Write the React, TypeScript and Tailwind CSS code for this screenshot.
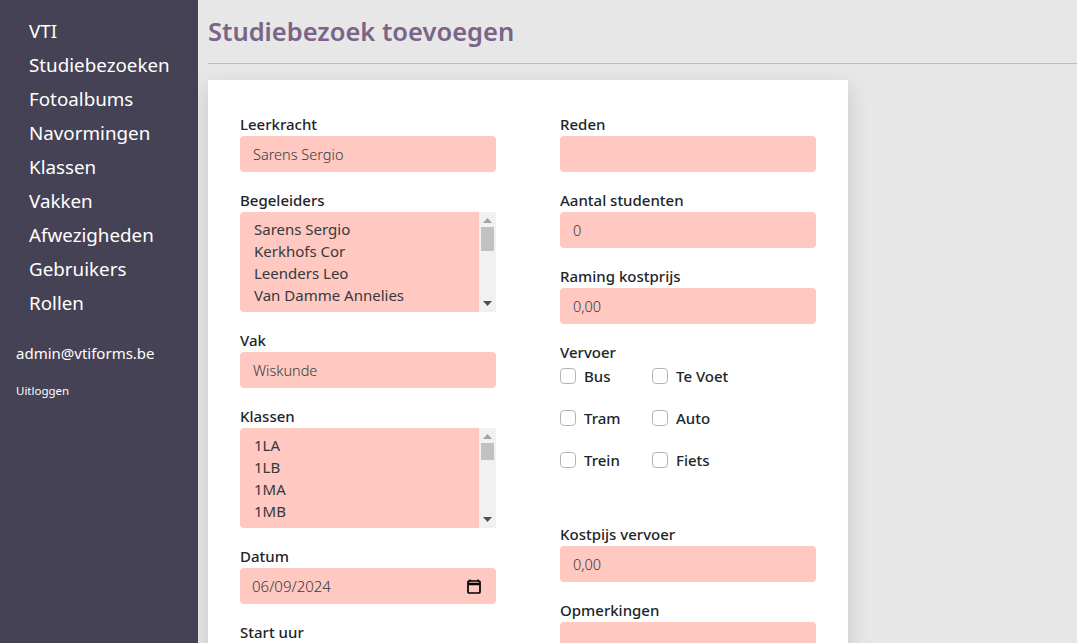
import React from 'react';

const navItems = ['VTI', 'Studiebezoeken', 'Fotoalbums', 'Navormingen', 'Klassen', 'Vakken', 'Afwezigheden', 'Gebruikers', 'Rollen'];

const Field: React.FC<{ label: string; value?: string; children?: React.ReactNode }> = ({ label, value, children }) => (
  <div className="mb-[16px]">
    <div className="text-[15px] leading-[24px] font-medium text-[#212529]">{label}</div>
    {children ?? (
      <div className="h-[36px] rounded-[4px] bg-[#ffc8c0] px-[13px] pt-[1px] flex items-center text-[14.5px] font-light text-[#343a40]">{value}</div>
    )}
  </div>
);

const ListBox: React.FC<{ label: string; items: string[]; thumb: string }> = ({ label, items, thumb }) => (
  <Field label={label}>
    <div className="h-[100px] flex overflow-hidden">
      <div className="flex-1 bg-[#ffc8c0] rounded-l-[4px] pl-[14px] pt-[6px] overflow-hidden text-[15px] leading-[22px] text-[#343a40]">
        {items.map((item) => (
          <div key={item}>{item}</div>
        ))}
      </div>
      <div className="w-[17px] bg-[#f1f1f1] flex flex-col items-center relative">
        <svg className="mt-[6px] w-[9px] h-[5px]" viewBox="0 0 9 5" fill="#a3a3a3">
          <path d="M4.5 0 9 5H0z" />
        </svg>
        <div className={`w-[13px] mt-[4px] bg-[#c1c1c1] ${thumb}`} />
        <svg className="absolute bottom-[6px] w-[9px] h-[5px]" viewBox="0 0 9 5" fill="#505050">
          <path d="M0 0h9L4.500 5z" />
        </svg>
      </div>
    </div>
  </Field>
);

const Check: React.FC<{ label: string }> = ({ label }) => (
  <div className="h-[42px] flex items-start">
    <div className="mt-[1px] w-[16px] h-[16px] rounded-[4px] bg-white border border-[#b5b5b5]" />
    <span className="ml-[8px] text-[15px] leading-[18px] font-medium text-[#212529]">{label}</span>
  </div>
);

export default function App() {
  return (
    <div className="h-screen flex overflow-hidden bg-[#e7e7e7] font-['Noto_Sans',sans-serif]">
      <aside className="w-[198px] shrink-0 bg-[#464255] text-white">
        <nav className="pt-[14px] pl-[29px]">
          {navItems.map((item) => (
            <div key={item} className="h-[34px] leading-[34px] text-[18.8px] whitespace-nowrap">{item}</div>
          ))}
        </nav>
        <div className="pl-[16px] mt-[21px] text-[15px] leading-[24px]">admin@vtiforms.be</div>
        <div className="pl-[16px] mt-[17px] text-[11.5px] leading-[18px]">Uitloggen</div>
      </aside>
      <main className="flex-1 pl-[10px] min-w-0">
        <h1 className="h-[64px] border-b border-[#bdbdbd] pt-[12px] text-[25.5px] leading-[38px] font-semibold text-[#7a6488]">Studiebezoek toevoegen</h1>
        <div className="mt-[16px] w-[640px] h-[700px] bg-white shadow-[0_8px_20px_rgba(0,0,0,0.15)] px-[32px] pt-[32px] flex gap-[64px]">
          <div className="w-[256px]">
            <Field label="Leerkracht" value="Sarens Sergio" />
            <ListBox label="Begeleiders" items={['Sarens Sergio', 'Kerkhofs Cor', 'Leenders Leo', 'Van Damme Annelies', 'Vanderhoeven Ilse']} thumb="h-[24px]" />
            <Field label="Vak" value="Wiskunde" />
            <ListBox label="Klassen" items={['1LA', '1LB', '1MA', '1MB']} thumb="h-[17px]" />
            <Field label="Datum">
              <div className="h-[36px] rounded-[4px] bg-[#ffc8c0] pl-[12px] pr-[15px] pt-[1px] flex items-center justify-between text-[15px] font-light text-[#343a40]">
                <span>06/09/2024</span>
                <svg className="w-[14px] h-[15px]" viewBox="0 0 14 15" fill="none">
                  <path d="M3 .5v2M11 .5v2" stroke="#000" strokeWidth="1.500" />
                  <rect x="1" y="2" width="12" height="12" rx="1" stroke="#000" strokeWidth="1.700" />
                  <path d="M1 5h12" stroke="#000" strokeWidth="2.500" />
                </svg>
              </div>
            </Field>
            <Field label="Start uur" value="" />
          </div>
          <div className="w-[256px]">
            <Field label="Reden" value="" />
            <Field label="Aantal studenten" value="0" />
            <Field label="Raming kostprijs" value="0,00" />
            <div className="h-[182px]">
              <div className="text-[15px] leading-[24px] font-medium text-[#212529]">Vervoer</div>
              <div className="grid grid-cols-[92px_1fr] mt-[3px]">
                {['Bus', 'Te Voet', 'Tram', 'Auto', 'Trein', 'Fiets'].map((item) => (
                  <Check key={item} label={item} />
                ))}
              </div>
            </div>
            <Field label="Kostpijs vervoer" value="0,00" />
            <Field label="Opmerkingen">
              <div className="h-[60px] rounded-[4px] bg-[#ffc8c0]" />
            </Field>
          </div>
        </div>
      </main>
    </div>
  );
}
